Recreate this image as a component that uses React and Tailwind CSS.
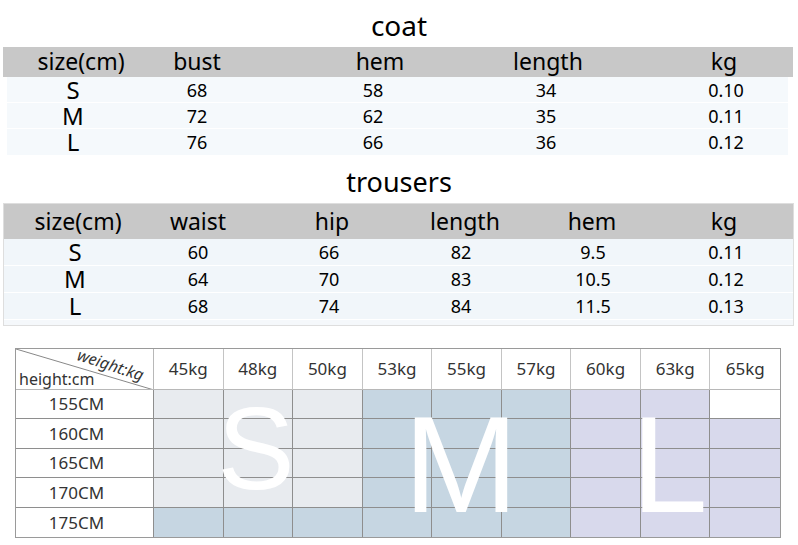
import React from "react";

const coatHeadMl = ["ml-[28px]", "ml-[16px]", "ml-[83px]", "ml-[68px]", "ml-[76px]"];
const coatBodyMl = ["ml-[16px]", "ml-[24px]", "ml-[76px]", "ml-[73px]", "ml-[80px]"];
const trHeadMl = ["ml-[24px]", "ml-[20px]", "ml-[34px]", "ml-[33px]", "ml-[27px]", "ml-[32px]"];
const trBodyMl = ["ml-[21px]", "ml-[23px]", "ml-[31px]", "ml-[32px]", "ml-[32px]", "ml-[33px]"];

const coatHead = ["size(cm)", "bust", "hem", "length", "kg"];
const coatRows = [
  ["S", "68", "58", "34", "0.10"],
  ["M", "72", "62", "35", "0.11"],
  ["L", "76", "66", "36", "0.12"],
];
const trHead = ["size(cm)", "waist", "hip", "length", "hem", "kg"];
const trRows = [
  ["S", "60", "66", "82", "9.5", "0.11"],
  ["M", "64", "70", "83", "10.5", "0.12"],
  ["L", "68", "74", "84", "11.5", "0.13"],
];

const weights = ["45kg", "48kg", "50kg", "53kg", "55kg", "57kg", "60kg", "63kg", "65kg"];
const heights = ["155CM", "160CM", "165CM", "170CM", "175CM"];

function cellBg(r, c) {
  if (c <= 2) return r < 4 ? "bg-[#e8ebef]" : "bg-[#c6d6e2]";
  if (c <= 5) return "bg-[#c6d6e2]";
  if (c <= 7) return "bg-[#d8d9ec]";
  return r === 0 ? "bg-white" : "bg-[#d8d9ec]";
}

function Row({ cells, mls, first }) {
  return (
    <div className="flex h-full items-center">
      {cells.map((t, i) => (
        <div
          key={i}
          className={`${mls[i]} w-[100px] shrink-0 text-center ${
            i === 0 && first ? "text-[24px] leading-[22px]" : ""
          }`}
        >
          {t}
        </div>
      ))}
    </div>
  );
}

export default function App() {
  return (
    <div className="w-[798px] h-[545px] bg-white text-black overflow-hidden font-['Noto_Sans',sans-serif]">
      {/* coat */}
      <div className="h-[47px] pt-[8px] text-center text-[28px] leading-[34px]">coat</div>
      <div className="ml-[3px] w-[790px] h-[30px] bg-[#c8c8c8] text-[23px] leading-[28px] pb-[3px]">
        <Row cells={coatHead} mls={coatHeadMl} />
      </div>
      <div className="ml-[7px] w-[781px] bg-[#f5f9fc] text-[18px] leading-[22px]">
        {coatRows.map((r, i) => (
          <div key={i} className={`h-[26px] ${i < 2 ? "border-b border-white" : ""}`}>
            <Row cells={r} mls={coatBodyMl} first />
          </div>
        ))}
      </div>

      {/* trousers */}
      <div className="h-[48px] pt-[10px] text-center text-[27px] leading-[34px]">trousers</div>
      <div className="ml-[3px] w-[791px] h-[123px] border border-[#dedede] bg-[#f5f8fb]">
        <div className="h-[35px] bg-[#c8c8c8] text-[23px] leading-[28px] pb-[2px]">
          <Row cells={trHead} mls={trHeadMl} />
        </div>
        <div className="text-[18px] leading-[22px]">
          {trRows.map((r, i) => (
            <div key={i} className="h-[27px] border-b border-white bg-[#f1f6fa]">
              <Row cells={r} mls={trBodyMl} first />
            </div>
          ))}
        </div>
      </div>

      {/* chart */}
      <div className="relative ml-[15px] mt-[22px] w-[766px] h-[190px] border border-[#9a9a9a] text-[#333]">
        <div className="grid h-full grid-cols-[138px_repeat(9,minmax(0,1fr))] grid-rows-[41px_repeat(5,minmax(0,1fr))]">
          <div className="relative border-r border-b border-[#b8b8b8] bg-white overflow-hidden">
            <svg className="absolute inset-0" width="138" height="41" viewBox="0 0 138 41">
              <line x1="0" y1="0" x2="138" y2="41" stroke="#888" strokeWidth="1" />
            </svg>
            <span className="absolute left-[62px] top-[-3px] rotate-[18deg] origin-left text-[16px] leading-none italic whitespace-nowrap">
              weight:kg
            </span>
            <span className="absolute left-[3px] bottom-[2px] text-[16px] leading-none whitespace-nowrap">
              height:cm
            </span>
          </div>
          {weights.map((w, i) => (
            <div
              key={w}
              className={`flex items-center justify-center bg-white border-b border-[#b8b8b8] text-[17px] ${
                i < 8 ? "border-r border-r-[#c4c4c4]" : ""
              }`}
            >
              {w}
            </div>
          ))}
          {heights.map((h, r) => (
            <React.Fragment key={h}>
              <div
                className={`flex items-center justify-center pr-[16px] bg-white border-r border-[#8e8e8e] text-[17px] ${
                  r < 4 ? "border-b" : ""
                }`}
              >
                {h}
              </div>
              {weights.map((w, c) => (
                <div
                  key={w}
                  className={`${cellBg(r, c)} border-[#8e8e8e] ${c < 8 ? "border-r" : ""} ${
                    r < 4 ? "border-b" : ""
                  }`}
                />
              ))}
            </React.Fragment>
          ))}
        </div>
        <div className="pointer-events-none absolute left-[240px] top-[42px] -translate-x-1/2 text-[116px] leading-none text-white font-['Liberation_Sans',sans-serif]">
          S
        </div>
        <div className="pointer-events-none absolute left-[445px] top-[46px] -translate-x-1/2 text-[138px] leading-none text-white font-['Liberation_Sans',sans-serif]">
          M
        </div>
        <div className="pointer-events-none absolute left-[615px] top-[46px] text-[138px] leading-none text-white font-['Liberation_Sans',sans-serif]">
          L
        </div>
      </div>
    </div>
  );
}
